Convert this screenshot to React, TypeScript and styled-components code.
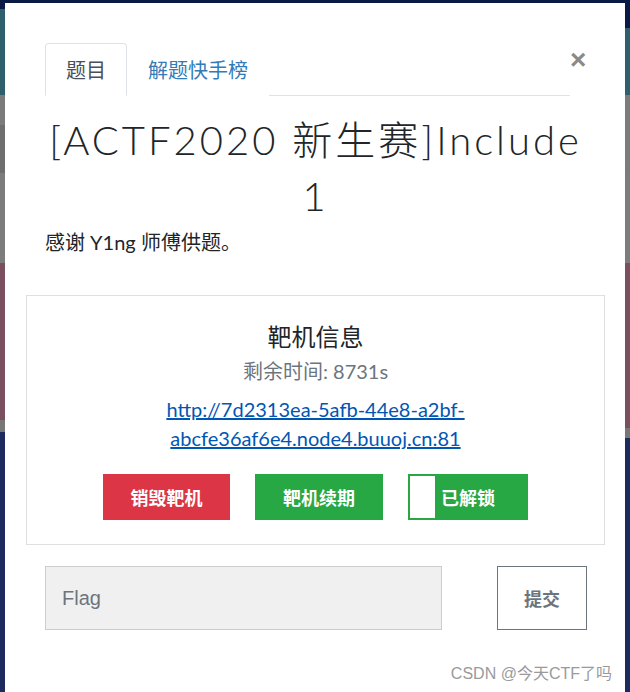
import React, { useState } from 'react';
import styled, { createGlobalStyle } from 'styled-components';

const GlobalStyle = createGlobalStyle`
  html, body {
    margin: 0;
    padding: 0;
    background: #0b1a45;
    overflow: hidden;
  }
  body {
    font-family: Lato, "Noto Sans CJK SC", sans-serif;
    color: #212529;
  }
`;

const Page = styled.div`
  height: 692px;
  padding-top: 3px;
  box-sizing: border-box;
  display: flex;
  overflow: hidden;
`;

const Strip = styled.div`
  width: 5px;
  display: flex;
  flex-direction: column;
`;

const Band = styled.div<{ $h?: number; $c: string }>`
  height: ${(p) => (p.$h ? `${p.$h}px` : 'auto')};
  flex: ${(p) => (p.$h ? '0 0 auto' : '1')};
  background: ${(p) => p.$c};
`;

const Modal = styled.div`
  flex: 1;
  background: #fff;
  padding: 40px 20px 0 21px;
  box-sizing: border-box;
  position: relative;
  overflow: hidden;
`;

const Header = styled.div`
  display: flex;
  align-items: flex-start;
  margin: 0 19px;
`;

const Tabs = styled.div`
  flex: 1;
  display: flex;
  border-bottom: 1px solid #dee2e6;
`;

const Tab = styled.div<{ $active?: boolean }>`
  height: 51px;
  padding: 0 20px;
  display: flex;
  align-items: center;
  font-size: 20px;
  margin-bottom: -1px;
  border: 1px solid ${(p) => (p.$active ? '#dee2e6' : 'transparent')};
  border-bottom-color: ${(p) => (p.$active ? '#fff' : 'transparent')};
  border-radius: 4px 4px 0 0;
  color: ${(p) => (p.$active ? '#495057' : '#337ab7')};
  background: #fff;
  cursor: pointer;
`;

const Close = styled.button`
  border: none;
  background: none;
  padding: 0;
  margin: 5px 0 0 0;
  width: 16px;
  height: 24px;
  font-family: "Liberation Sans", sans-serif;
  font-size: 28px;
  line-height: 24px;
  font-weight: 700;
  color: #8a8a8a;
  cursor: pointer;
`;

const Title = styled.h1`
  margin: 16px 19px 0;
  text-align: center;
  font-size: 40px;
  line-height: 56px;
  font-weight: 300;
  letter-spacing: 3px;
  color: #212529;
`;

const Description = styled.p`
  margin: 3px 0 0 19px;
  font-size: 20px;
  line-height: 30px;
`;

const InfoBox = styled.div`
  margin-top: 38px;
  height: 250px;
  box-sizing: border-box;
  border: 1px solid #dfdfdf;
  display: flex;
  flex-direction: column;
  align-items: center;
  padding-top: 24px;
`;

const BoxTitle = styled.div`
  font-size: 24px;
  line-height: 34px;
  font-weight: 400;
`;

const Remaining = styled.div`
  font-size: 20px;
  line-height: 34px;
  color: #6c757d;
`;

const TargetLink = styled.a`
  margin-top: 7px;
  width: 320px;
  text-align: center;
  font-size: 20px;
  line-height: 29px;
  color: #0056b3;
  text-decoration: underline;
`;

const Actions = styled.div`
  margin-top: 21px;
  display: flex;
  gap: 25px;
`;

const ActionButton = styled.button<{ $color: string; $w: number }>`
  width: ${(p) => p.$w}px;
  height: 46px;
  border: 1px solid ${(p) => p.$color};
  background: ${(p) => p.$color};
  color: #fff;
  font-family: "Noto Sans CJK SC", sans-serif;
  font-size: 18px;
  font-weight: 700;
  cursor: pointer;
  position: relative;
  padding: 0;
`;

const Knob = styled.span`
  position: absolute;
  left: 1px;
  top: 1px;
  bottom: 1px;
  width: 25px;
  background: #fff;
`;

const FlagForm = styled.form`
  margin: 21px 18px 0 19px;
  display: flex;
  justify-content: space-between;
`;

const FlagInput = styled.input`
  width: 397px;
  height: 64px;
  box-sizing: border-box;
  background: #f0f0f0;
  border: 1px solid #ccc;
  padding: 0 16px;
  font-family: "Liberation Sans", Arial, sans-serif;
  font-size: 20px;
  color: #333;
  outline: none;
  &::placeholder {
    color: #6c757d;
  }
`;

const SubmitButton = styled.button`
  width: 90px;
  height: 64px;
  background: #fff;
  border: 1px solid #6c757d;
  color: #6c757d;
  font-family: "Noto Sans CJK SC", sans-serif;
  font-size: 18px;
  font-weight: 700;
  cursor: pointer;
`;

const Watermark = styled.div`
  position: absolute;
  right: 13px;
  top: 657px;
  font-family: "Liberation Sans", "Noto Sans CJK SC", sans-serif;
  font-size: 16px;
  color: #9a9a9a;
  pointer-events: none;
`;

const leftBands = [
  { h: 6, c: '#0b1a45' },
  { h: 86, c: '#2f5f6c' },
  { h: 30, c: '#7b7b7b' },
  { h: 48, c: '#6e6e6e' },
  { h: 90, c: '#7c7c7c' },
  { h: 157, c: '#7a5060' },
  { h: 12, c: '#777' },
  { c: '#1d2a5e' },
];

const rightBands = [
  { h: 25, c: '#0b1a45' },
  { h: 67, c: '#2f5f6c' },
  { h: 78, c: '#7b7b7b' },
  { h: 90, c: '#7c7c7c' },
  { h: 165, c: '#7a5060' },
  { h: 10, c: '#777' },
  { c: '#1d2a5e' },
];

const App: React.FC = () => {
  const [tab, setTab] = useState(0);
  const [flag, setFlag] = useState('');

  return (
    <>
      <GlobalStyle />
      <Page>
        <Strip>
          {leftBands.map((b, i) => (
            <Band key={i} $h={b.h} $c={b.c} />
          ))}
        </Strip>
        <Modal>
          <Header>
            <Tabs>
              <Tab $active={tab === 0} onClick={() => setTab(0)}>题目</Tab>
              <Tab $active={tab === 1} onClick={() => setTab(1)}>解题快手榜</Tab>
            </Tabs>
            <Close aria-label="close">×</Close>
          </Header>

          <Title>[ACTF2020 新生赛]Include 1</Title>
          <Description>感谢 Y1ng 师傅供题。</Description>

          <InfoBox>
            <BoxTitle>靶机信息</BoxTitle>
            <Remaining>剩余时间: 8731s</Remaining>
            <TargetLink href="#">http://7d2313ea-5afb-44e8-a2bf-abcfe36af6e4.node4.buuoj.cn:81</TargetLink>
            <Actions>
              <ActionButton $color="#dc3545" $w={127}>销毁靶机</ActionButton>
              <ActionButton $color="#28a745" $w={128}>靶机续期</ActionButton>
              <ActionButton $color="#28a745" $w={120}>
                <Knob />
                已解锁
              </ActionButton>
            </Actions>
          </InfoBox>

          <FlagForm onSubmit={(e) => e.preventDefault()}>
            <FlagInput
              type="text"
              placeholder="Flag"
              value={flag}
              onChange={(e) => setFlag(e.target.value)}
            />
            <SubmitButton type="submit">提交</SubmitButton>
          </FlagForm>

          <Watermark>CSDN @今天CTF了吗</Watermark>
        </Modal>
        <Strip>
          {rightBands.map((b, i) => (
            <Band key={i} $h={b.h} $c={b.c} />
          ))}
        </Strip>
      </Page>
    </>
  );
};

export default App;
